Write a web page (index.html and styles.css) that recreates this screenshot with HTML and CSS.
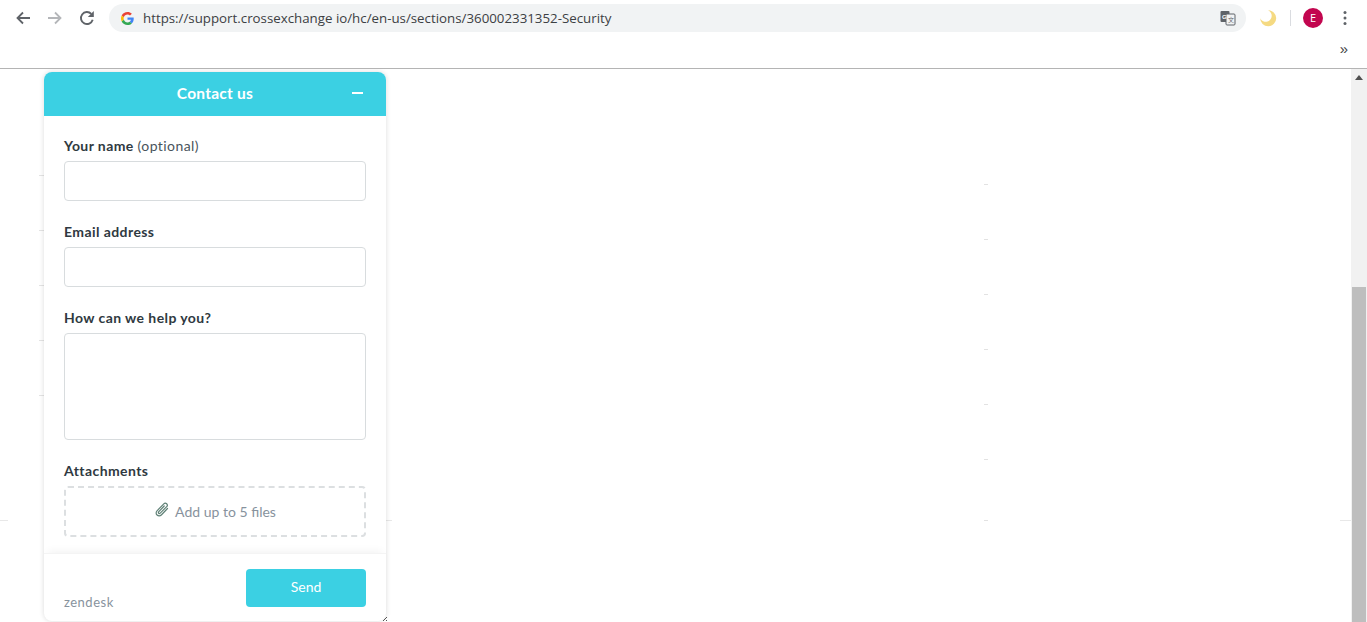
FILE: index.html
```html
<!DOCTYPE html>
<html lang="en">
<head>
<meta charset="utf-8">
<title>Security</title>
<link rel="stylesheet" href="styles.css">
</head>
<body>
<header class="chrome">
  <div class="toolbar">
    <svg class="nav" viewBox="0 0 16 16"><path d="M15 8H2.500M8 2.500 2.500 8 8 13.500" fill="none" stroke="#5f6368" stroke-width="1.800"/></svg>
    <svg class="nav" viewBox="0 0 16 16"><path d="M1 8h12.500M8 2.500 13.500 8 8 13.500" fill="none" stroke="#b4b6b9" stroke-width="1.800"/></svg>
    <svg class="nav" viewBox="0 0 16 16"><path d="M13.700 9.800A6 6 0 1 1 12.300 3.900" fill="none" stroke="#5f6368" stroke-width="1.900"/><path d="M14.800 1v6H8.800z" fill="#5f6368"/></svg>
    <div class="omnibox">
      <svg class="g-logo" viewBox="0 0 48 48"><path fill="#ea4335" d="M24 9.500c3.500 0 6.700 1.200 9.200 3.600l6.900-6.900C35.900 2.400 30.400 0 24 0 14.600 0 6.500 5.400 2.600 13.200l8 6.200C12.400 13.700 17.700 9.500 24 9.500z"/><path fill="#4285f4" d="M46.900 24.500c0-1.600-.1-3.100-.4-4.500H24v9h12.900c-.6 3-2.200 5.500-4.800 7.200l7.700 6c4.500-4.200 7.100-10.300 7.100-17.700z"/><path fill="#fbbc05" d="M10.500 28.600c-.5-1.400-.8-3-.8-4.600s.3-3.200.8-4.600l-8-6.200C.9 16.500 0 20.100 0 24s.9 7.500 2.600 10.800z"/><path fill="#34a853" d="M24 48c6.500 0 11.900-2.100 15.900-5.800l-7.700-6c-2.200 1.400-4.900 2.300-8.100 2.300-6.300 0-11.600-4.200-13.500-9.900l-8 6.200C6.500 42.600 14.600 48 24 48z"/></svg>
      <span class="url">https://support.crossexchange io/hc/en-us/sections/360002331352-Security</span>
      <svg class="translate" viewBox="0 0 16 16"><rect x="0.500" y="1" width="9" height="11" rx="1" fill="#5f6368"/><rect x="6" y="4" width="9" height="11" rx="1" fill="#f1f3f4" stroke="#5f6368"/><text x="2" y="9" class="translate-g">G</text><text x="8" y="12" class="translate-a">文</text></svg>
    </div>
    <svg class="moon" viewBox="0 0 18 18"><path d="M9 1.200A8 8 0 1 1 1.200 9.200 6 6 0 1 0 9 1.200z" fill="#f5da82"/></svg>
    <span class="divider"></span>
    <span class="avatar">E</span>
    <svg class="kebab" viewBox="0 0 4 16"><circle cx="2" cy="2.500" r="1.500"/><circle cx="2" cy="8" r="1.500"/><circle cx="2" cy="13.500" r="1.500"/></svg>
  </div>
  <div class="bookmarks"><span class="more">»</span></div>
</header>

<div class="viewport">
  <main class="page">
    <i class="tick t1"></i><i class="tick t2"></i><i class="tick t3"></i><i class="tick t4"></i><i class="tick t5"></i><i class="tick t6"></i><i class="tick t7"></i>
    <i class="rule r1"></i><i class="rule r2"></i><i class="rule r3"></i>
    <i class="stub s1"></i><i class="stub s2"></i><i class="stub s3"></i><i class="stub s4"></i><i class="stub s5"></i>

    <section class="widget">
      <div class="widget-head">
        <h1 class="widget-title">Contact us</h1>
        <span class="minimize"></span>
      </div>
      <form class="widget-body">
        <div class="field">
          <label class="label">Your name <span class="optional">(optional)</span></label>
          <input class="control" type="text">
        </div>
        <div class="field">
          <label class="label">Email address</label>
          <input class="control" type="text">
        </div>
        <div class="field">
          <label class="label">How can we help you?</label>
          <textarea class="control area"></textarea>
        </div>
        <div class="field">
          <label class="label">Attachments</label>
          <div class="drop">
            <svg class="clip" viewBox="0 0 16 16"><path d="M13.500 6.500 7.300 13a3 3 0 0 1-4.300-4.200l6.800-7a2 2 0 0 1 2.900 2.800L6 11.300a1 1 0 0 1-1.400-1.400l5.600-5.900" fill="none" stroke="#5f8076" stroke-width="1.200" stroke-linecap="round"/></svg>
            <span>Add up to 5 files</span>
          </div>
        </div>
      </form>
      <div class="widget-foot">
        <span class="brand">zendesk</span>
        <button class="send" type="button">Send</button>
      </div>
      <svg class="resize" viewBox="0 0 6 6"><path d="M1 5 5 1M4 5l1-1" stroke="#555" stroke-width="1" fill="none"/></svg>
    </section>
  </main>
  <aside class="scrollbar">
    <div class="arrow"></div>
    <div class="thumb"></div>
  </aside>
</div>
</body>
</html>
```
FILE: styles.css
```css
* { box-sizing: border-box; }
html, body { margin: 0; height: 622px; overflow: hidden; background: #fff; }
body { display: flex; flex-direction: column; font-family: "Lato", "Liberation Sans", sans-serif; }

.chrome { height: 69px; flex: none; border-bottom: 1px solid #b4b4b4; background: #fff; }
.toolbar { height: 36px; display: flex; align-items: center; padding-left: 15px; }
.nav { width: 16px; height: 16px; margin-right: 16px; flex: none; }
.nav:nth-child(3) { margin-right: 14px; }
.omnibox { width: 1137px; height: 28px; border-radius: 14px; background: #f1f3f4; display: flex; align-items: center; padding: 0 10px 0 12px; }
.g-logo { width: 13px; height: 13px; flex: none; }
.url { margin-left: 9px; flex: 1; font: 13.300px "Open Sans", "Noto Sans", sans-serif; color: #3c4043; white-space: nowrap; }
.translate { width: 16px; height: 16px; flex: none; }
.translate-g { font: bold 6px "Liberation Sans", sans-serif; fill: #fff; }
.translate-a { font: 6px "Noto Sans CJK SC", sans-serif; fill: #5f6368; }
.moon { width: 18px; height: 18px; margin-left: 13px; flex: none; }
.divider { width: 1px; height: 16px; background: #dadce0; margin-left: 13px; flex: none; }
.avatar { width: 20px; height: 20px; margin-left: 12px; border-radius: 50%; background: #c2064f; color: #fff; font: 11px/20px "Open Sans", sans-serif; text-align: center; flex: none; }
.kebab { width: 4px; height: 16px; margin-left: 20px; fill: #5f6368; flex: none; }
.bookmarks { height: 32px; display: flex; justify-content: flex-end; padding-right: 19px; }
.more { font: 15px/25px "Liberation Sans", sans-serif; color: #444; }

.viewport { flex: 1; min-height: 0; display: flex; }
.page { flex: 1; position: relative; overflow: hidden; }
.tick { position: absolute; left: 984px; width: 4px; height: 1px; background: #e2e2e2; }
.t1 { top: 115px; } .t2 { top: 170px; } .t3 { top: 225px; } .t4 { top: 280px; } .t5 { top: 335px; } .t6 { top: 390px; } .t7 { top: 451px; }
.rule { position: absolute; top: 451px; height: 1px; background: #e8e8e8; }
.r1 { left: 0; width: 8px; } .r2 { left: 384px; width: 8px; } .r3 { left: 1340px; width: 11px; }
.stub { position: absolute; left: 39px; width: 5px; height: 1px; background: #e4e4e4; }
.s1 { top: 106px; } .s2 { top: 161px; } .s3 { top: 216px; } .s4 { top: 271px; } .s5 { top: 326px; }

.widget { position: absolute; left: 44px; top: 3px; width: 342px; height: 549px; border-radius: 8px; background: #fff; box-shadow: 0 0 4px 1px rgba(0, 0, 0, .1); display: flex; flex-direction: column; }
.widget-head { height: 44px; flex: none; display: flex; align-items: center; justify-content: center; position: relative; background: #3bd0e3; border-radius: 8px 8px 0 0; }
.widget-title { margin: 0 0 2px; font-size: 15.500px; letter-spacing: .25px; font-weight: 700; color: #fff; }
.minimize { position: absolute; right: 23px; top: 20px; width: 11px; height: 2px; background: #fff; }
.widget-body { flex: 1; padding: 21px 20px 0; display: flex; flex-direction: column; gap: 22px; }
.field { display: flex; flex-direction: column; }
.label { font-size: 14px; letter-spacing: .42px; line-height: 18px; height: 24px; font-weight: 700; color: #2f3941; }
.optional { font-weight: 400; color: #49545c; }
.control { display: block; width: 302px; height: 40px; border: 1px solid #d8dcde; border-radius: 4px; background: #fff; margin: 0; padding: 0; resize: none; }
.area { height: 107px; }
.drop { height: 51px; border: 2px dashed #dcdfe1; border-radius: 4px; display: flex; align-items: center; justify-content: center; gap: 5px; font-size: 14px; color: #87929d; }
.clip { width: 16px; height: 16px; margin-top: -4px; }
.widget-foot { height: 68px; flex: none; border-top: 1px solid #f4f4f4; box-shadow: 0 -6px 8px -4px rgba(0, 0, 0, .05); padding: 15px 20px 0; display: flex; justify-content: space-between; align-items: flex-start; position: relative; }
.brand { font-size: 13px; letter-spacing: .5px; color: #87929d; margin-top: 25px; }
.send { width: 120px; height: 38px; border: 0; border-radius: 4px; background: #3bd0e3; color: #fff; font: 14px/36px "Lato", sans-serif; padding: 0 0 2px; }
.resize { position: absolute; right: -2px; bottom: -1px; width: 6px; height: 6px; }

.scrollbar { width: 16px; flex: none; background: #f1f1f1; display: flex; flex-direction: column; justify-content: space-between; }
.arrow { width: 0; height: 0; margin: 6px 0 0 4px; border: 4px solid transparent; border-top: 0; border-bottom: 5px solid #505050; }
.thumb { height: 335px; margin-left: 1px; width: 14px; background: #bebebe; }
```
